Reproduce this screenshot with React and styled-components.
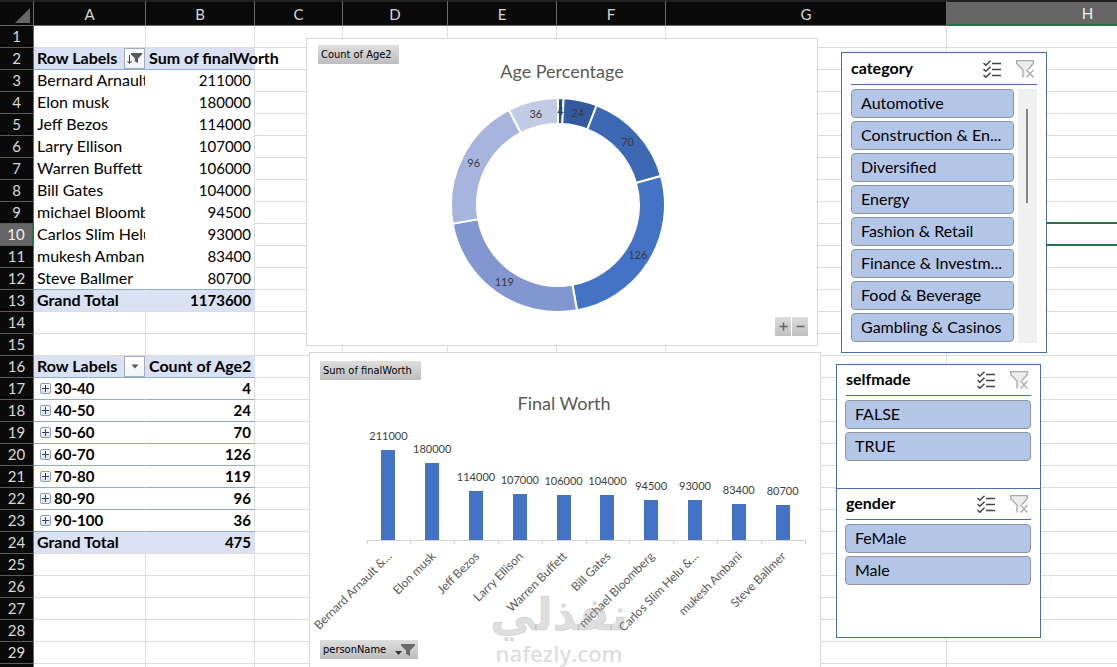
import React, { useState } from 'react';
import styled, { createGlobalStyle, css } from 'styled-components';

const GlobalStyle = createGlobalStyle`
    * {
        box-sizing: border-box;
    }

    body {
        margin: 0;
        background: #fff;
        font-family: Lato, Inter, sans-serif;
        font-size: 15px;
        color: #000;
    }

    button {
        font: inherit;
        color: inherit;
        padding: 0;
        margin: 0;
        cursor: pointer;
    }
`

const Workbook = styled.main`
    position: relative;
    height: 100vh;
    overflow: hidden;
`

/* ---------- grid ---------- */

const Grid = styled.table`
    border-collapse: separate;
    border-spacing: 0;
    table-layout: fixed;
    width: 1229px;
`

const Corner = styled.td`
    height: 25px;
    padding: 0 3px 2px 0;
    text-align: right;
    vertical-align: bottom;
    background: #0a0a0a;
    border-top: 2px solid #202020;
    border-right: 1px solid #6a6a6a;
    border-bottom: 1px solid #6a6a6a;

    svg {
        display: block;
        margin-left: auto;
    }
`

const ColumnHead = styled.th`
    height: 25px;
    padding: 0;
    font-weight: 400;
    line-height: 22px;
    color: ${p => p.$active ? '#f2f2f2' : '#d8d8d8'};
    background: ${p => p.$active ? '#666' : '#0a0a0a'};
    border-top: 2px solid #202020;
    border-right: 1px solid #6a6a6a;
    border-bottom: ${p => p.$active ? '2px solid #217346' : '1px solid #6a6a6a'};
`

const RowHead = styled.th`
    height: 22px;
    padding: 0;
    font-weight: 400;
    line-height: 21px;
    color: ${p => p.$active ? '#f2f2f2' : '#d8d8d8'};
    background: ${p => p.$active ? '#666' : '#0a0a0a'};
    border-right: ${p => p.$active ? '2px solid #217346' : '1px solid #6a6a6a'};
    border-bottom: 1px solid #5c5c5c;
`

const Cell = styled.td`
    position: relative;
    height: 22px;
    padding: 0 3px;
    font-size: ${p => p.$number ? 15 : 16}px;
    line-height: ${p => p.$number ? 21 : 19}px;
    vertical-align: top;
    white-space: nowrap;
    border-right: 1px solid ${p => p.$noRight ? 'transparent' : '#dcdcdc'};
    border-bottom: 1px solid ${p => p.$rule ? '#8ea9db' : p.$noBottom ? 'transparent' : '#dcdcdc'};
    text-align: ${p => p.$number ? 'right' : 'left'};
    font-weight: ${p => p.$bold ? 700 : 400};
    overflow: ${p => p.$clip ? 'hidden' : 'visible'};
    ${p => p.$fill && css`
        background: #d9e1f2;
        border-right-color: #d9e1f2;
    `}
    ${p => p.$active && css`
        &::after {
            content: '';
            position: absolute;
            inset: -2px -1px -1px -2px;
            border: 2px solid #217346;
        }
    `}
`

const CellRow = styled.div`
    display: flex;
    align-items: flex-start;
    justify-content: space-between;
    margin-right: -3px;
    height: 21px;
`

const GroupRow = styled.div`
    display: flex;
    align-items: center;
    gap: 3px;
    padding-left: 3px;
    font-size: 15px;
    line-height: 21px;
`

const FilterButton = styled.button`
    display: grid;
    place-items: center;
    width: 21px;
    height: 21px;
    border: 1px solid #a3abb9;
    background: linear-gradient(#fff, #f1f3f7);
`

const ExpandButton = styled.button`
    display: grid;
    place-items: center;
    width: 11px;
    height: 11px;
    border: 1px solid #8d9db8;
    border-radius: 2px;
    background: linear-gradient(#fff, #dbe2ee);
`

/* ---------- charts ---------- */

const ChartPanel = styled.section`
    position: absolute;
    left: ${p => p.$left}px;
    top: ${p => p.$top}px;
    width: 512px;
    height: ${p => p.$height}px;
    display: flex;
    flex-direction: column;
    align-items: flex-start;
    padding: ${p => p.$pad};
    background: #fff;
    border: 1px solid #d4d4d4;
`

const ChartTitle = styled.h2`
    align-self: center;
    margin: ${p => p.$gap}px 2px 0 0;
    font-size: 18px;
    font-weight: 400;
    line-height: 14px;
    color: #595959;
`

const FieldButton = styled.button`
    display: flex;
    align-items: center;
    gap: 9px;
    height: 19px;
    padding: 0 ${p => p.$end}px 0 3px;
    border: 0;
    background: linear-gradient(#dedede, #bdbdbd);
    font-family: "DejaVu Sans Condensed", "DejaVu Sans", sans-serif;
    font-size: 11px;
    line-height: 19px;
    white-space: nowrap;
`

const DonutSvg = styled.svg`
    align-self: center;
    margin: 19px 11px 4px 0;
    font-size: 11px;
    fill: #3b3b3b;
`

const BarsSvg = styled.svg`
    margin: 14px 0 4px;
    overflow: visible;
    font-size: 11px;
    fill: #404040;
`

const DrillButtons = styled.div`
    display: flex;
    gap: 1px;
    align-self: flex-end;
`

const DrillButton = styled.button`
    display: grid;
    place-items: center;
    width: 16px;
    height: 19px;
    border: 0;
    background: linear-gradient(#dcdcdc, #c0c0c0);
`

/* ---------- slicers ---------- */

const SlicerPanel = styled.section`
    position: absolute;
    left: ${p => p.$left}px;
    top: ${p => p.$top}px;
    width: ${p => p.$width}px;
    height: ${p => p.$height}px;
    padding: 0 9px 0 8px;
    background: #fff;
    border: 1px solid #4a6ea9;
`

const SlicerHead = styled.header`
    display: flex;
    align-items: center;
    gap: 15px;
    height: ${p => p.$height}px;
    margin-left: 1px;
    padding-right: 3px;
    border-bottom: 1px solid #4a6ea9;
`

const SlicerTitle = styled.h3`
    flex: 1;
    margin: 0;
    padding-bottom: 2px;
    font-size: 16px;
    line-height: 18px;
`

const IconButton = styled.button`
    display: block;
    width: 18px;
    height: 20px;
    border: 0;
    background: none;

    svg {
        display: block;
    }
`

const SlicerBody = styled.div`
    display: flex;
    gap: 4px;
    margin-top: 4px;
`

const SlicerList = styled.div`
    flex: 1;
    min-width: 0;
    display: flex;
    flex-direction: column;
    gap: 3px;
    padding-left: ${p => p.$inset ? 1 : 0}px;
`

const SlicerItem = styled.button`
    height: 29px;
    padding: 0 9px 2px;
    border: 1px solid #8f959f;
    border-radius: 4px;
    background: ${p => p.$on ? '#b4c6e7' : '#fff'};
    font-size: 16px;
    text-align: left;
    white-space: nowrap;
`

const ScrollTrack = styled.div`
    width: 19px;
    height: 254px;
    padding: 20px 0 0 8px;
    background: #f0f0f0;
`

const ScrollThumb = styled.div`
    width: 2px;
    height: 94px;
    background: #858585;
`

/* ---------- watermark ---------- */

const Watermark = styled.div`
    position: absolute;
    left: 488px;
    top: 592px;
    width: 142px;
    display: flex;
    flex-direction: column;
    align-items: center;
    color: rgba(150, 150, 150, 0.32);
    font-weight: 700;
    pointer-events: none;
`

const WatermarkArabic = styled.span`
    font-family: "DejaVu Sans", sans-serif;
    font-size: 45px;
    line-height: 46px;
    -webkit-text-stroke: 1px rgba(150, 150, 150, 0.2);
`

const WatermarkLatin = styled.span`
    font-family: "Open Sans", sans-serif;
    font-size: 22px;
    font-weight: 600;
    line-height: 30px;
`

/* ---------- data ---------- */

const columns = [
    { name: 'A', width: 112 },
    { name: 'B', width: 109 },
    { name: 'C', width: 88 },
    { name: 'D', width: 105 },
    { name: 'E', width: 109 },
    { name: 'F', width: 109 },
    { name: 'G', width: 281 },
    { name: 'H', width: 282 },
];

const people = [
    { name: 'Bernard Arnault', axis: 'Bernard Arnault &...', worth: 211000 },
    { name: 'Elon musk', worth: 180000 },
    { name: 'Jeff Bezos', worth: 114000 },
    { name: 'Larry Ellison', worth: 107000 },
    { name: 'Warren Buffett', worth: 106000 },
    { name: 'Bill Gates', worth: 104000 },
    { name: 'michael Bloomberg', worth: 94500 },
    { name: 'Carlos Slim Helu', axis: 'Carlos Slim Helu &...', worth: 93000 },
    { name: 'mukesh Ambani', worth: 83400 },
    { name: 'Steve Ballmer', worth: 80700 },
];

const ages = [
    { range: '30-40', count: 4, color: '#2a4b86' },
    { range: '40-50', count: 24, color: '#335a9f' },
    { range: '50-60', count: 70, color: '#3c68b4' },
    { range: '60-70', count: 126, color: '#4472c4' },
    { range: '70-80', count: 119, color: '#8297d0' },
    { range: '80-90', count: 96, color: '#a7b4dd' },
    { range: '90-100', count: 36, color: '#c1cce4' },
];

const categories = [
    'Automotive',
    'Construction & En...',
    'Diversified',
    'Energy',
    'Fashion & Retail',
    'Finance & Investm...',
    'Food & Beverage',
    'Gambling & Casinos',
];

/* ---------- icons ---------- */

const SortedFilterIcon = () => (
    <svg width="15" height="13" viewBox="0 0 15 13">
        <path d="M2.5 3v8M0.5 9l2 2.5 2-2.5" fill="none" stroke="#444" />
        <path d="M4 1h11v1.5l-4 4V11l-3-1.5v-3L4 2.5z" fill="#595959" />
    </svg>
)

const CaretIcon = () => (
    <svg width="8" height="5" viewBox="0 0 8 5">
        <path d="M0.5 0.5h7L4 4.5z" fill="#595959" />
    </svg>
)

const PlusIcon = () => (
    <svg width="9" height="9" viewBox="0 0 9 9">
        <path d="M4.5 1v7M1 4.5h7" stroke="#33415f" />
    </svg>
)

const ChecklistIcon = () => (
    <svg width="18" height="18" viewBox="0 0 18 18" fill="none" stroke="#444" strokeWidth="1.5">
        <path d="M0.5 3l2.3 2.3L7.5 0.7M0.5 9l2.3 2.3L7.5 6.7M0.5 15l2.3 2.3L7.5 12.7" />
        <path d="M9 3.5h9M9 9.5h9M9 15.5h9" />
    </svg>
)

const ClearFilterIcon = () => (
    <svg width="18" height="18" viewBox="0 0 18 18" stroke="#a8a8a8" strokeWidth="1.3">
        <path d="M12 9.5L17.3 3.5V0.7H0.7v2.8L7 10v7.5" fill="#ededed" />
        <path d="M10.5 10l7 7.5M17.5 10l-7 7.5" fill="none" />
    </svg>
)

const FieldFilterIcon = () => (
    <svg width="20" height="14" viewBox="0 0 20 14">
        <path d="M0 8h7l-3.5 4z" fill="#333" />
        <path d="M6 1h14v1.5l-5 5V13l-4-2V7.5l-5-5z" fill="#6b6b6b" />
    </svg>
)

/* ---------- parts ---------- */

function pivotCell(row, column) {
    if (column > 1) return null;
    const first = column === 0;

    if (row === 2 || row === 16) {
        const label = row === 2 ? 'Sum of finalWorth' : 'Count of Age2';
        return {
            style: { $fill: true, $rule: true, $bold: true },
            content: first
                ? <CellRow>
                    Row Labels
                    <FilterButton aria-label="Filter row labels">
                        {row === 2 ? <SortedFilterIcon /> : <CaretIcon />}
                    </FilterButton>
                </CellRow>
                : label,
        };
    }
    if (row >= 3 && row <= 12) {
        const person = people[row - 3];
        return {
            style: { $noRight: first, $noBottom: true, $rule: row === 12, $clip: first, $number: !first },
            content: first ? person.name : person.worth,
        };
    }
    if (row === 13 || row === 24) {
        const total = row === 13 ? 1173600 : 475;
        return {
            style: { $fill: true, $bold: true, $number: !first },
            content: first ? 'Grand Total' : total,
        };
    }
    if (row >= 17 && row <= 23) {
        const age = ages[row - 17];
        return {
            style: { $noRight: first, $rule: true, $bold: true, $number: !first },
            content: first
                ? <GroupRow>
                    <ExpandButton aria-label={`Expand ${age.range}`}><PlusIcon /></ExpandButton>
                    {age.range}
                </GroupRow>
                : age.count,
        };
    }
    return null;
}

function Spreadsheet() {
    const rows = Array.from({ length: 30 }, (_, i) => i + 1);

    return (
        <Grid>
            <colgroup>
                <col width="34" />
                {columns.map(c => <col key={c.name} width={c.width} />)}
            </colgroup>
            <thead>
                <tr>
                    <Corner>
                        <svg width="15" height="15" viewBox="0 0 15 15">
                            <path d="M15 0v15H0z" fill="#666" />
                        </svg>
                    </Corner>
                    {columns.map(c => (
                        <ColumnHead key={c.name} scope="col" $active={c.name === 'H'}>{c.name}</ColumnHead>
                    ))}
                </tr>
            </thead>
            <tbody>
                {rows.map(row => (
                    <tr key={row}>
                        <RowHead scope="row" $active={row === 10}>{row}</RowHead>
                        {columns.map((c, i) => {
                            const cell = pivotCell(row, i);
                            return (
                                <Cell key={c.name} $active={row === 10 && c.name === 'H'} {...(cell && cell.style)}>
                                    {cell && cell.content}
                                </Cell>
                            );
                        })}
                    </tr>
                ))}
            </tbody>
        </Grid>
    );
}

function Donut() {
    const total = ages.reduce((sum, a) => sum + a.count, 0);
    const point = (radius, share) => {
        const angle = share * 2 * Math.PI;
        return [108 + radius * Math.sin(angle), 108 - radius * Math.cos(angle)];
    };
    let used = 0;

    const slices = ages.map(age => {
        const from = used / total;
        used += age.count;
        const to = used / total;
        const large = to - from > 0.5 ? 1 : 0;
        const d = `M${point(107, from)} A107 107 0 ${large} 1 ${point(107, to)}`
            + ` L${point(81, to)} A81 81 0 ${large} 0 ${point(81, from)} Z`;
        return { ...age, d, label: point(94, (from + to) / 2) };
    });

    return (
        <DonutSvg width="216" height="216" viewBox="0 0 216 216">
            {slices.map(s => (
                <path key={s.range} d={s.d} fill={s.color} stroke="#fff" strokeWidth="2" />
            ))}
            {slices.map(s => (
                <text key={s.range} x={s.label[0]} y={s.label[1] + 4} textAnchor="middle">{s.count}</text>
            ))}
        </DonutSvg>
    );
}

function Bars() {
    const step = 43.8;
    const start = 46.5;
    const base = 116;

    return (
        <BarsSvg width="490" height="212" viewBox="0 0 490 212">
            {people.map((p, i) => {
                const x = start + step * (i + 0.5);
                const height = Math.round(p.worth * 0.000428);
                return (
                    <g key={p.name}>
                        <rect x={Math.round(x - 7)} y={base - height} width="14" height={height} fill="#4472c4" />
                        <text x={x} y={base - height - 10} textAnchor="middle">{p.worth}</text>
                        <text
                            transform={`translate(${x + 4} ${base + 17}) rotate(-45)`}
                            textAnchor="end"
                            fontSize="12"
                            fill="#595959"
                        >
                            {p.axis || p.name}
                        </text>
                    </g>
                );
            })}
            <path
                d={`M${start} ${base + 0.5}h438` + people.concat(0).map((_, i) => `M${Math.round(start + step * i) + 0.5} ${base}v4`).join('')}
                stroke="#d4d4d4"
                fill="none"
            />
        </BarsSvg>
    );
}

function Slicer({ title, items, scroll, headHeight, ...place }) {
    const [off, setOff] = useState([]);
    const toggle = item => setOff(off.includes(item) ? off.filter(o => o !== item) : [...off, item]);

    return (
        <SlicerPanel {...place}>
            <SlicerHead $height={headHeight}>
                <SlicerTitle>{title}</SlicerTitle>
                <IconButton aria-label="Multi-select"><ChecklistIcon /></IconButton>
                <IconButton aria-label="Clear filter" onClick={() => setOff([])}><ClearFilterIcon /></IconButton>
            </SlicerHead>
            <SlicerBody>
                <SlicerList $inset={scroll}>
                    {items.map(item => (
                        <SlicerItem
                            key={item}
                            $on={!off.includes(item)}
                            aria-pressed={!off.includes(item)}
                            onClick={() => toggle(item)}
                        >
                            {item}
                        </SlicerItem>
                    ))}
                </SlicerList>
                {scroll && <ScrollTrack><ScrollThumb /></ScrollTrack>}
            </SlicerBody>
        </SlicerPanel>
    );
}

export default function App() {
    return (
        <Workbook>
            <GlobalStyle />
            <Spreadsheet />

            <ChartPanel $left={306} $top={38} $height={308} $pad="6px 9px 0 11px">
                <FieldButton $end={7}>Count of Age2</FieldButton>
                <ChartTitle $gap={0}>Age Percentage</ChartTitle>
                <Donut />
                <DrillButtons>
                    <DrillButton aria-label="Expand field">
                        <svg width="9" height="9" viewBox="0 0 9 9"><path d="M4.5 0.5v8M0.5 4.5h8" stroke="#666" strokeWidth="1.5" /></svg>
                    </DrillButton>
                    <DrillButton aria-label="Collapse field">
                        <svg width="9" height="9" viewBox="0 0 9 9"><path d="M0.5 4.5h8" stroke="#666" strokeWidth="1.5" /></svg>
                    </DrillButton>
                </DrillButtons>
            </ChartPanel>

            <ChartPanel $left={309} $top={352} $height={340} $pad="8px 10px 0">
                <FieldButton $end={9}>Sum of finalWorth</FieldButton>
                <ChartTitle $gap={16}>Final Worth</ChartTitle>
                <Bars />
                <FieldButton $end={3}>personName <FieldFilterIcon /></FieldButton>
            </ChartPanel>

            <Slicer title="category" items={categories} scroll headHeight={32} $left={841} $top={52} $width={206} $height={301} />
            <Slicer title="selfmade" items={['FALSE', 'TRUE']} headHeight={31} $left={836} $top={364} $width={205} $height={125} />
            <Slicer title="gender" items={['FeMale', 'Male']} headHeight={31} $left={836} $top={488} $width={205} $height={150} />

            <Watermark>
                <WatermarkArabic lang="ar" dir="rtl">نفذلي</WatermarkArabic>
                <WatermarkLatin>nafezly.com</WatermarkLatin>
            </Watermark>
        </Workbook>
    );
}
